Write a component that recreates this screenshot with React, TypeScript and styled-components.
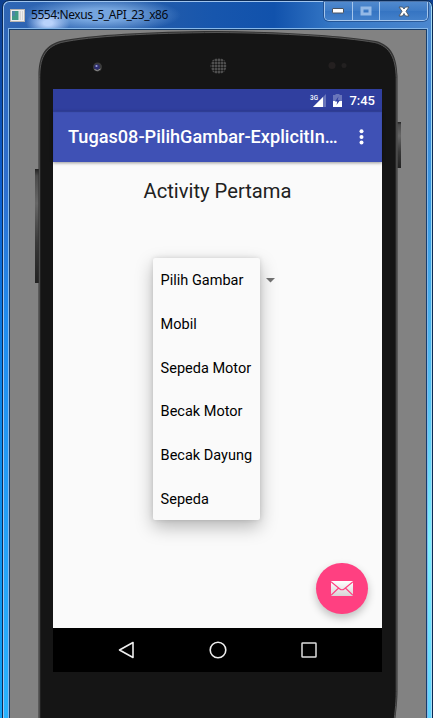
import React from 'react';
import styled, { createGlobalStyle } from 'styled-components';

const GlobalStyle = createGlobalStyle`
  * { box-sizing: border-box; }
  body { margin: 0; overflow: hidden; }
`;

const Desktop = styled.div`
  width: 433px;
  height: 718px;
  overflow: hidden;
  background: linear-gradient(#0d3f8f 0, #0a4cae 90px, #0b5fd0 190px, #0a86ea 400px, #10a4f8 718px);
`;

const Window = styled.section`
  position: relative;
  display: flex;
  flex-direction: column;
  width: 431px;
  height: 740px;
  margin-left: 2px;
  padding: 0 5px 0 6px;
  border: 1px solid #0b2a55;
  border-radius: 7px 7px 0 0;
  box-shadow: inset 1px 1px 0 #9fc4ee, inset -1px 0 0 #a6dcf4;
  background:
    linear-gradient(#4c8ad0 0, #3f86d4 90px, #3a9be4 210px, #55c2f4 400px, #7df1ff 540px, #5cd2ff 718px) right top / 8px 100% no-repeat,
    linear-gradient(#2f66b5 0, #2c6fd0 190px, #1e8cf0 320px, #27b3ff 718px);
`;

const TitleBar = styled.header`
  display: flex;
  align-items: flex-start;
  height: 27px;
  margin: 1px -4px 0 -5px;
  padding: 0 3px 0 6px;
  border-radius: 6px 6px 0 0;
  background:
    radial-gradient(ellipse 22px 13px at 44px 21px, #b9d2fb 20%, rgba(185, 210, 251, 0) 100%),
    radial-gradient(ellipse 80px 18px at 97px 13px, rgba(125, 172, 228, 0.9) 35%, rgba(90, 145, 210, 0) 100%),
    linear-gradient(90deg, #2f66b5 0, #285ea9 120px, #1756ad 210px, #1152ac 270px, #3678c6 330px, #4b87cf 427px);
`;

const AppIcon = styled.svg`
  margin-top: 7px;
`;

const WindowTitle = styled.h1`
  margin: 3px 0 0 6px;
  flex: 1;
  font: 400 12px/19px 'Noto Sans', 'Open Sans', sans-serif;
  letter-spacing: -0.43px;
  color: #050a14;
  white-space: nowrap;
`;

const Controls = styled.div`
  display: flex;
  height: 19px;
  border: 1px solid #a5c6ec;
  border-top: 0;
  border-radius: 0 0 5px 5px;
  box-shadow: 0 0 0 1px rgba(25, 63, 120, 0.6);
`;

const Control = styled.button<{ $width: number }>`
  display: grid;
  place-items: center;
  width: ${(p) => p.$width}px;
  padding: 0;
  border: 0;
  border-right: 1px solid #a5c6ec;
  background: linear-gradient(#5089ce, #3d7bc6 50%, #3574c2 50%, #4380ca);
  &:first-child { border-radius: 0 0 0 4px; }
  &:last-child { border-right: 0; border-radius: 0 0 4px 0; }
`;

const Client = styled.main`
  position: relative;
  flex: 1;
  border: 1px solid #173e6c;
  border-bottom: 0;
  box-shadow: 0 0 0 1px #86b8ea;
  background: #828282;
  padding: 59px 0 0 43px;
`;

const Shell = styled.svg`
  position: absolute;
  left: -10px;
  top: -30px;
`;

const Screen = styled.div`
  position: relative;
  display: flex;
  flex-direction: column;
  width: 329px;
  height: 583px;
  background: #fafafa;
  font-family: Roboto, sans-serif;
`;

const StatusBar = styled.div`
  display: flex;
  align-items: center;
  justify-content: flex-end;
  height: 22px;
  padding-right: 7px;
  background: #303f9f;
  color: #fff;
`;

const Clock = styled.time`
  margin-left: 6px;
  padding-top: 1px;
  font-size: 13px;
  font-weight: 500;
  line-height: 22px;
`;

const AppBar = styled.div`
  position: relative;
  display: flex;
  align-items: center;
  height: 51px;
  padding: 0 18px 0 15px;
  background: #3f51b5;
  box-shadow: 0 1px 3px rgba(0, 0, 0, 0.4), inset 0 1px 1px rgba(30, 40, 110, 0.5);
`;

const AppTitle = styled.h2`
  flex: 1;
  margin: 0;
  color: #fff;
  font-size: 18.15px;
  font-weight: 500;
  line-height: 24px;
  white-space: nowrap;
`;

const Content = styled.div`
  position: relative;
  flex: 1;
`;

const Heading = styled.h3`
  margin: 17px 0 0;
  color: #212121;
  font-size: 20.2px;
  font-weight: 400;
  line-height: 24px;
  text-align: center;
`;

const Caret = styled.svg`
  position: absolute;
  left: 213px;
  top: 116px;
`;

const Menu = styled.ul`
  position: absolute;
  left: 100px;
  top: 96px;
  width: 107px;
  height: 262px;
  margin: 0;
  padding: 0 0 0 7.6px;
  list-style: none;
  border-radius: 2px;
  background: #fafafa;
  box-shadow: 0 7px 18px rgba(0, 0, 0, 0.27), 0 0 5px rgba(0, 0, 0, 0.12);
`;

const MenuItem = styled.li`
  height: 43.75px;
  color: #000;
  font-size: 14.5px;
  line-height: 46px;
  white-space: nowrap;
`;

const Fab = styled.button`
  position: absolute;
  right: 14.5px;
  bottom: 14px;
  display: grid;
  place-items: center;
  width: 51.5px;
  height: 51.5px;
  padding: 0;
  border: 0;
  border-radius: 50%;
  background: #ff4081;
  box-shadow: 0 4px 8px rgba(0, 0, 0, 0.24);
`;

const NavBar = styled.nav`
  display: flex;
  align-items: center;
  justify-content: center;
  gap: 67px;
  height: 44px;
  background: #000;
`;

const items = ['Pilih Gambar', 'Mobil', 'Sepeda Motor', 'Becak Motor', 'Becak Dayung', 'Sepeda'];

const bodyPath =
  'M38.500 730V76C38.500 58 43 46 60 41C90 34.500 150 31.500 217 31C285 31.500 345 35.500 376 41C392 45 397 58 397.500 76V690C397.500 704 396 712 394 730Z';

const PhoneShell = () => (
  <Shell width="433" height="740" viewBox="0 0 433 740">
    <defs>
      <linearGradient id="key" x2="0" y2="1">
        <stop offset="0" stopColor="#222" />
        <stop offset=".06" stopColor="#4b4b4b" />
        <stop offset=".3" stopColor="#666" />
        <stop offset=".65" stopColor="#383838" />
        <stop offset="1" stopColor="#222" />
      </linearGradient>
      <pattern id="mesh" width="3" height="3" patternUnits="userSpaceOnUse">
        <rect width="3" height="3" fill="#606060" />
        <circle cx="1.500" cy="1.500" r="1.200" fill="#161616" />
      </pattern>
    </defs>
    <rect x="35" y="169" width="4" height="114" fill="url(#key)" />
    <rect x="397.500" y="122" width="3.500" height="46" fill="url(#key)" />
    <path d={bodyPath} fill="#333" />
    <path d={bodyPath} fill="#151515" stroke="#555" transform="translate(1.500 1.500) scale(.993 1)" />
    <circle cx="97.500" cy="67" r="4.500" fill="#3b3b3b" />
    <circle cx="97" cy="67" r="2.800" fill="#2d2d70" />
    <circle cx="96.500" cy="66" r="1.100" fill="#9ea2dd" />
    <path d="M94.500 69.500Q97.500 72 100.500 69" fill="none" stroke="#999" />
    <circle cx="218.500" cy="66" r="8" fill="url(#mesh)" />
    <circle cx="332" cy="65.500" r="3.500" fill="#242020" />
    <circle cx="344" cy="65.500" r="2.500" fill="#222020" />
  </Shell>
);

export default function App() {
  return (
    <Desktop>
      <GlobalStyle />
      <Window>
        <TitleBar>
          <AppIcon width="15" height="13" viewBox="0 0 15 13">
            <rect x=".5" y=".5" width="14" height="12" fill="#eee" stroke="#b9b5b0" />
            <rect x="2" y="2" width="6.500" height="9" fill="#3f9a85" />
            <path d="M2 2h3v5H2z" fill="#4c86a5" />
            <path d="M9.500 2h1.500v9H9.500zM12 2h1v9h-1z" fill="#d5d5d5" />
          </AppIcon>
          <WindowTitle>5554:Nexus_5_API_23_x86</WindowTitle>
          <Controls>
            <Control $width={28} aria-label="Minimize">
              <svg width="13" height="6" viewBox="0 0 13 6">
                <rect x=".5" y=".5" width="11" height="4.500" rx=".5" fill="#fff" stroke="#4a5360" />
              </svg>
            </Control>
            <Control $width={27} aria-label="Maximize">
              <svg width="12" height="10" viewBox="0 0 12 10">
                <rect x="2" y="2" width="8" height="6" fill="none" stroke="#94b9e6" strokeWidth="3" />
              </svg>
            </Control>
            <Control $width={47} aria-label="Close">
              <svg width="12" height="11" viewBox="0 0 12 11">
                <path d="M1 1h3.500L6 3l1.500-2H11L8 5.300 11 10H7.500L6 7.500 4.500 10H1l3-4.700z" fill="#fff" stroke="#4a5360" strokeWidth=".9" />
              </svg>
            </Control>
          </Controls>
        </TitleBar>
        <Client>
          <PhoneShell />
          <Screen>
            <StatusBar>
              <svg width="34" height="15" viewBox="0 0 34 15">
                <text x="1" y="7" fill="#fff" fontSize="8" fontWeight="500" fontFamily="Roboto" textLength="8" lengthAdjust="spacingAndGlyphs">3G</text>
                <path d="M17 1v13H4z" fill="#6975ba" />
                <path d="M14 4v10H4z" fill="#fff" />
                <path d="M26.500 1h4v1h2.500v12h-9V2h2.500z" fill="#6975ba" />
                <path d="M24 8h9v6h-9z" fill="#fff" />
                <path d="M29.500 3.500L26 8.500h2.300L27.500 12l3.500-4.700h-2.300z" fill="#303f9f" />
              </svg>
              <Clock>7:45</Clock>
            </StatusBar>
            <AppBar>
              <AppTitle>Tugas08-PilihGambar-ExplicitIn…</AppTitle>
              <svg width="5" height="16" viewBox="0 0 5 16" fill="#fff">
                <circle cx="2.500" cy="2.200" r="2" />
                <circle cx="2.500" cy="7.900" r="2" />
                <circle cx="2.500" cy="13.600" r="2" />
              </svg>
            </AppBar>
            <Content>
              <Heading>Activity Pertama</Heading>
              <Caret width="9" height="5" viewBox="0 0 9 5">
                <path d="M0 0h9L4.500 4.500z" fill="#737373" />
              </Caret>
              <Menu>
                {items.map((item) => (
                  <MenuItem key={item}>{item}</MenuItem>
                ))}
              </Menu>
              <Fab aria-label="Mail">
                <svg width="22" height="15" viewBox="0 0 22 15">
                  <defs>
                    <linearGradient id="mail" x2="0" y2="1">
                      <stop stopColor="#fff" />
                      <stop offset="1" stopColor="#d8d4d6" />
                    </linearGradient>
                  </defs>
                  <rect width="22" height="15" fill="url(#mail)" />
                  <path d="M0 .7L8.500 7.700Q11 9.800 13.500 7.700L22 .7M0 14.300L7.600 7M22 14.300L14.400 7" fill="none" stroke="#ff4081" strokeWidth="1.200" />
                </svg>
              </Fab>
            </Content>
            <NavBar>
              <svg width="24" height="24" viewBox="0 0 24 24">
                <path d="M4.500 12L18 4.500v15z" fill="none" stroke="#eee" strokeWidth="1.600" strokeLinejoin="round" />
              </svg>
              <svg width="24" height="24" viewBox="0 0 24 24">
                <circle cx="12" cy="12" r="7.800" fill="none" stroke="#eee" strokeWidth="1.600" />
              </svg>
              <svg width="24" height="24" viewBox="0 0 24 24">
                <rect x="5" y="5" width="14" height="14" rx=".6" fill="none" stroke="#ddd" strokeWidth="1.500" />
              </svg>
            </NavBar>
          </Screen>
        </Client>
      </Window>
    </Desktop>
  );
}
